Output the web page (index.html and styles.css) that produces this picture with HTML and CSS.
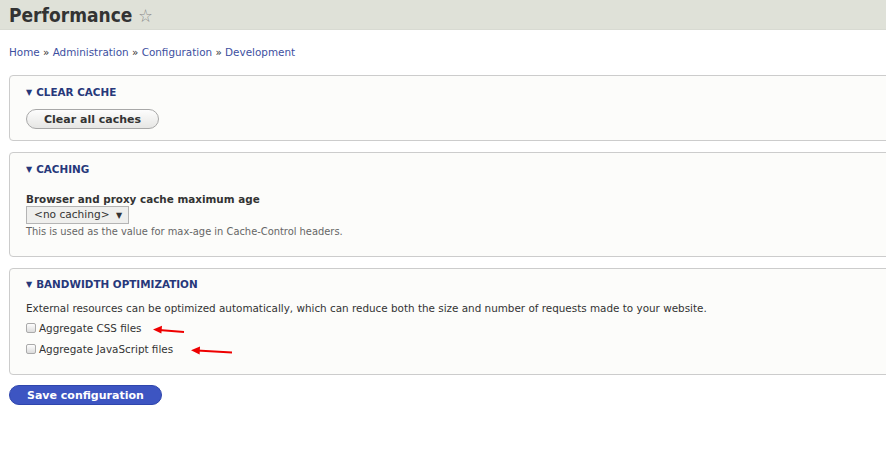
FILE: index.html
```html
<!DOCTYPE html>
<html>
<head>
	<meta charset="utf-8">
	<title>Performance</title>
	<link rel="stylesheet" href="styles.css">
</head>
<body>
	<div class="header">
		<h1 class="page-title">Performance <span class="star">&#9734;</span></h1>
	</div>

	<div class="content">
		<div class="breadcrumb">
			<a href="#">Home</a> » <a href="#">Administration</a> » <a href="#">Configuration</a> » <a href="#">Development</a>
		</div>

		<fieldset class="box">
			<div class="legend"><span class="arrow">&#9660;</span>CLEAR CACHE</div>
			<button class="btn">Clear all caches</button>
		</fieldset>

		<fieldset class="box">
			<div class="legend"><span class="arrow">&#9660;</span>CACHING</div>
			<div class="field">
				<label class="field-label">Browser and proxy cache maximum age</label>
				<div class="select">&lt;no caching&gt; <span class="caret">&#9660;</span></div>
				<div class="desc">This is used as the value for max-age in Cache-Control headers.</div>
			</div>
		</fieldset>

		<fieldset class="box box-last">
			<div class="legend"><span class="arrow">&#9660;</span>BANDWIDTH OPTIMIZATION</div>
			<p class="intro">External resources can be optimized automatically, which can reduce both the size and number of requests made to your website.</p>
			<div class="checks">
				<div class="check">
					<span class="checkbox"></span>
					<span class="check-label">Aggregate CSS files</span>
					<svg class="red-arrow" width="32" height="10" viewBox="0 0 32 10">
						<path d="M31 7 L6 5" stroke="#e00" stroke-width="2" fill="none"/>
						<path d="M0 4.6 L9 0.8 L8.4 8.6 Z" fill="#e00"/>
					</svg>
				</div>
				<div class="check">
					<span class="checkbox"></span>
					<span class="check-label">Aggregate JavaScript files</span>
					<svg class="red-arrow red-arrow2" width="42" height="10" viewBox="0 0 42 10">
						<path d="M41 6.5 L6 4.6" stroke="#e00" stroke-width="2" fill="none"/>
						<path d="M0 4.2 L9 0.5 L8.6 8.4 Z" fill="#e00"/>
					</svg>
				</div>
			</div>
		</fieldset>

		<button class="btn btn-primary">Save configuration</button>
	</div>
</body>
</html>
```

FILE: styles.css
```css
body {
	margin: 0;
	font-family: "DejaVu Sans", Verdana, sans-serif;
	font-size: 10.4px;
	color: #333;
	background: #fff;
	overflow-x: hidden;
}

.header {
	background: #dfe1d8;
	height: 30px;
	border-bottom: 1px solid #d8dad2;
	box-sizing: border-box;
	padding-left: 9px;
}
.page-title {
	margin: 0;
	font-family: "DejaVu Sans Condensed", "DejaVu Sans", sans-serif;
	font-size: 19px;
	font-weight: bold;
	line-height: 30px;
	color: #333;
}
.star {
	font-weight: normal;
	color: #888;
	font-size: 18px;
}

.content {
	padding: 15px 0 0 9px;
}

.breadcrumb {
	line-height: 14px;
	margin-bottom: 16px;
}
.breadcrumb a {
	color: #3d4f9f;
	text-decoration: none;
}

.box {
	margin: 0 -20px 11px 0;
	padding: 9px 16px 11px 16px;
	border: 1px solid #ccc;
	border-radius: 4px;
	background: #fcfcfa;
	min-width: 0;
}
.box-last {
	padding-top: 8px;
	margin-bottom: 10px;
}
.legend {
	font-weight: bold;
	color: #27387a;
	line-height: 14px;
	margin-bottom: 9px;
}
.arrow {
	font-size: 8px;
	margin-right: 4px;
	vertical-align: 1px;
}

.btn {
	font-family: "DejaVu Sans", sans-serif;
	font-weight: bold;
	font-size: 11px;
	color: #333;
	height: 20px;
	padding: 0 17px;
	border: 1px solid #a8a8a8;
	border-radius: 10px;
	background: linear-gradient(#fdfdfd, #e6e6e4);
}

.field {
	margin: 15px 0 8px;
}
.field-label {
	display: block;
	font-weight: bold;
	line-height: 14px;
}
.select {
	display: inline-block;
	border: 1px solid #b4b4b4;
	background: #efefed;
	padding: 0 6px 0 7px;
	line-height: 14px;
	font-size: 10.6px;
}
.caret {
	font-size: 8px;
	margin-left: 3px;
}
.desc {
	font-size: 9.9px;
	color: #666;
	margin-top: 2px;
}

.intro {
	margin: 3px 0 2px;
	line-height: 14px;
}
.checks {
	margin-bottom: 4px;
}
.check {
	display: flex;
	align-items: center;
	height: 21px;
}
.checkbox {
	width: 8px;
	height: 8px;
	border: 1px solid #aaa;
	border-radius: 2px;
	background: linear-gradient(#fdfdfd, #dcdcdc);
	margin: 0 3px 0 0;
}
.red-arrow {
	margin-left: 12px;
	margin-top: 5px;
}
.red-arrow2 {
	margin-left: 18px;
}

.btn-primary {
	color: #fff;
	background: #3d55c2;
	border-color: #2f46ad;
	padding: 0 17px;
}
```
